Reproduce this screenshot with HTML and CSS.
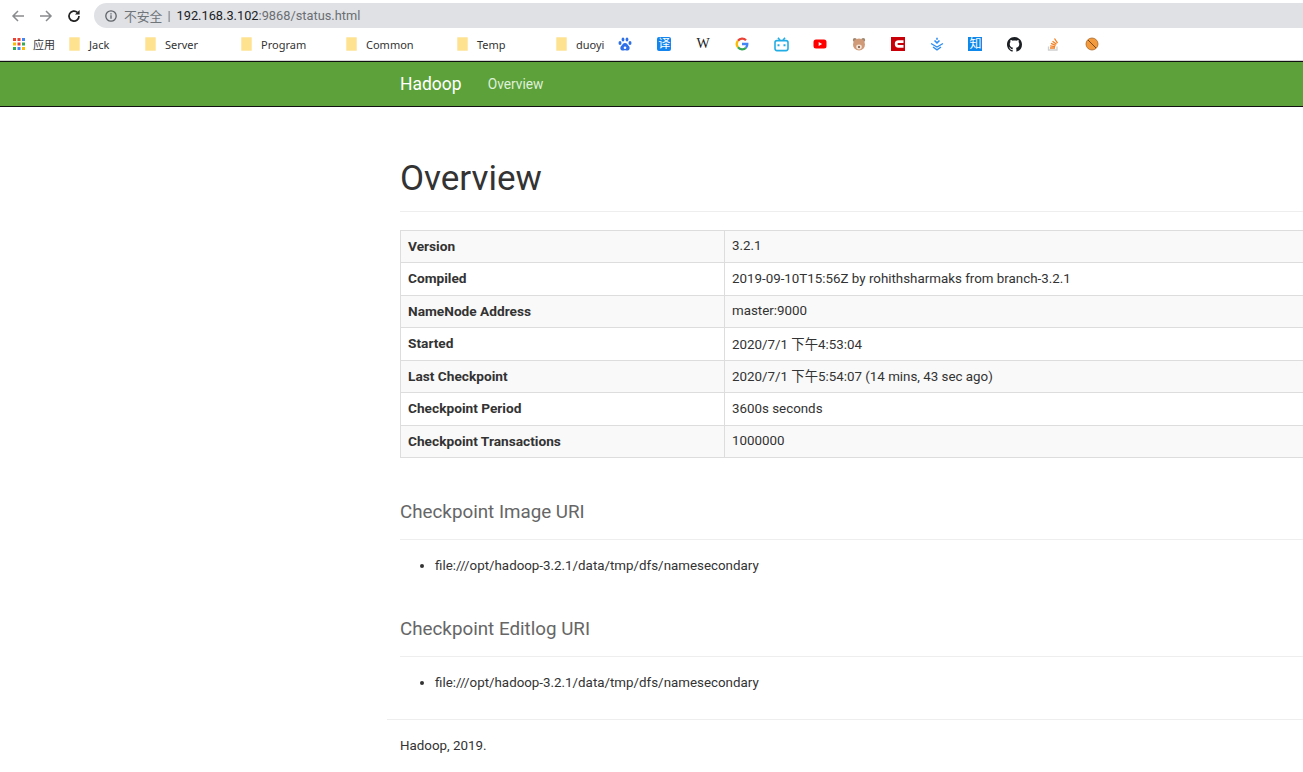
FILE: index.html
```html
<!DOCTYPE html>
<html lang="en">
<head>
    <meta charset="UTF-8">
    <title>Namenode information</title>
    <link rel="stylesheet" href="styles.css">
</head>
<body>
    <div class="toolbar">
        <div class="nav-icons">
            <svg class="nav-icon" width="16" height="16" viewBox="0 0 16 16"><path d="M14 8H3M8 3L3 8l5 5" fill="none" stroke="#8a8b8d" stroke-width="1.5"/></svg>
            <svg class="nav-icon" width="16" height="16" viewBox="0 0 16 16"><path d="M2 8h11M8 3l5 5-5 5" fill="none" stroke="#8a8b8d" stroke-width="1.5"/></svg>
            <svg class="nav-icon" width="16" height="16" viewBox="0 0 16 16"><path d="M13 8a5 5 0 1 1-1.500-3.500" fill="none" stroke="#222" stroke-width="1.700"/><path d="M13.600 2v4.600H9z" fill="#222"/></svg>
        </div>
        <div class="address-bar">
            <svg class="info-icon" width="14" height="14" viewBox="0 0 14 14"><circle cx="7" cy="7" r="5.200" fill="none" stroke="#5f6368" stroke-width="1.300"/><path d="M7 6.200v3.600M7 4.200v1.200" stroke="#5f6368" stroke-width="1.300"/></svg>
            <span class="not-secure">不安全</span>
            <span class="separator">|</span>
            <span class="url-host">192.168.3.102</span><span class="url-rest">:9868/status.html</span>
        </div>
    </div>

    <div class="bookmarks">
        <div class="bookmark apps">
            <svg width="12" height="12" viewBox="0 0 12 12">
                <rect x="0" y="0" width="3" height="3" fill="#ea4335"/><rect x="4.500" y="0" width="3" height="3" fill="#ea4335"/><rect x="9" y="0" width="3" height="3" fill="#4285f4"/>
                <rect x="0" y="4.500" width="3" height="3" fill="#fbbc05"/><rect x="4.500" y="4.500" width="3" height="3" fill="#ea4335"/><rect x="9" y="4.500" width="3" height="3" fill="#34a853"/>
                <rect x="0" y="9" width="3" height="3" fill="#34a853"/><rect x="4.500" y="9" width="3" height="3" fill="#4285f4"/><rect x="9" y="9" width="3" height="3" fill="#fbbc05"/>
            </svg>
            <span>应用</span>
        </div>
        <div class="bookmark folder jack"><span class="folder-icon"></span><span>Jack</span></div>
        <div class="bookmark folder server"><span class="folder-icon"></span><span>Server</span></div>
        <div class="bookmark folder program"><span class="folder-icon"></span><span>Program</span></div>
        <div class="bookmark folder common"><span class="folder-icon"></span><span>Common</span></div>
        <div class="bookmark folder temp"><span class="folder-icon"></span><span>Temp</span></div>
        <div class="bookmark folder duoyi"><span class="folder-icon"></span><span>duoyi</span></div>
        <div class="site-icons">
            <!-- baidu -->
            <svg width="14" height="14" viewBox="0 0 14 14" fill="#2f6fe8"><ellipse cx="2" cy="6" rx="1.500" ry="1.900"/><ellipse cx="5" cy="2.600" rx="1.400" ry="2"/><ellipse cx="9" cy="2.600" rx="1.400" ry="2"/><ellipse cx="12" cy="6" rx="1.500" ry="1.900"/><path d="M7 6c-2 0-2.500 1.800-3.800 2.900C1.800 10 2 13.500 4.800 13.500c1 0 1.400-.3 2.200-.3s1.200.3 2.200.3c2.800 0 3-3.500 1.600-4.600C9.500 7.800 9 6 7 6z"/><circle cx="7" cy="10.800" r="1.300" fill="#fff"/></svg>
            <!-- translate -->
            <span class="tile tile-blue">译</span>
            <!-- wikipedia -->
            <span class="wiki">W</span>
            <!-- google -->
            <svg width="14" height="14" viewBox="0 0 14 14" fill="none" stroke-width="2.300"><path d="M11 3.200A5.300 5.300 0 0 0 3 3.700" stroke="#ea4335"/><path d="M3 3.700a5.300 5.300 0 0 0 0 6.600" stroke="#fbbc05"/><path d="M3 10.300a5.300 5.300 0 0 0 8 .4" stroke="#34a853"/><path d="M11 10.700A5.300 5.300 0 0 0 12.300 7H7" stroke="#4285f4"/></svg>
            <!-- bilibili -->
            <svg width="15" height="15" viewBox="0 0 15 15" fill="none" stroke="#23ade5" stroke-width="1.600"><rect x="1" y="3.600" width="13" height="10" rx="2"/><path d="M4 .8l2 2.500M11 .8L9 3.300"/><path d="M4.500 7.200v2M10.500 7.200v2" stroke-width="2"/></svg>
            <!-- youtube -->
            <svg width="14" height="14" viewBox="0 0 14 14"><rect x="0.500" y="2.500" width="13" height="9" rx="2.500" fill="#f00"/><path d="M5.700 5v4l3.400-2z" fill="#fff"/></svg>
            <!-- bear -->
            <svg width="14" height="14" viewBox="0 0 14 14"><circle cx="2.800" cy="3" r="2" fill="#a0876f"/><circle cx="11.200" cy="3" r="2" fill="#a0876f"/><circle cx="7" cy="7.500" r="6" fill="#d09a78"/><ellipse cx="7" cy="10" rx="2.800" ry="2.400" fill="#f2e2d4"/><circle cx="7" cy="10" r="1" fill="#6b4a38"/></svg>
            <!-- csdn -->
            <svg width="14" height="14" viewBox="0 0 14 14"><rect width="14" height="14" fill="#c90007"/><path d="M12.500 4.600H7.500a2.400 2.400 0 0 0 0 4.800h5" fill="none" stroke="#fff" stroke-width="2.600"/></svg>
            <!-- download arrows -->
            <svg width="14" height="14" viewBox="0 0 14 14" fill="none" stroke="#2f8df0" stroke-width="1.400"><path d="M1 6.500l6 3.500 6-3.500"/><path d="M3 10l4 2.800 4-2.800"/><path d="M4.500 3.500L7 5.800l2.500-2.300" stroke-width="1.600"/><path d="M7 .8v2" stroke-width="1.600"/></svg>
            <!-- zhihu -->
            <span class="tile tile-zhihu">知</span>
            <!-- github -->
            <svg width="15" height="15" viewBox="0 0 16 16"><path fill="#1b1f23" d="M8 0C3.580 0 0 3.580 0 8c0 3.540 2.290 6.530 5.470 7.590.4.070.55-.17.55-.38 0-.19-.01-.82-.01-1.490-2.010.37-2.530-.49-2.690-.94-.09-.23-.48-.94-.82-1.130-.28-.15-.68-.52-.01-.53.630-.01 1.080.58 1.230.82.720 1.210 1.870.87 2.330.66.070-.52.280-.87.510-1.070-1.780-.2-3.640-.89-3.640-3.950 0-.87.310-1.590.820-2.150-.08-.2-.36-1.020.08-2.120 0 0 .67-.21 2.200.820.640-.18 1.320-.27 2-.27s1.360.09 2 .27c1.530-1.040 2.200-.82 2.200-.82.440 1.100.160 1.920.080 2.120.510.560.820 1.270.820 2.150 0 3.070-1.870 3.750-3.650 3.950.290.250.540.730.540 1.480 0 1.070-.01 1.930-.01 2.200 0 .210.150.460.550.380A8.010 8.010 0 0 0 16 8c0-4.420-3.580-8-8-8z"/></svg>
            <!-- stack overflow -->
            <svg width="14" height="14" viewBox="0 0 14 14" fill="none"><path d="M2.500 9.500v3.500h8.500V9.500" stroke="#cfcfcf" stroke-width="1.300"/><path d="M4 11h5M4.200 8.800l5 .8M5 6.400l4.700 1.900M6.500 4.200l4 3M8.500 1.500l3 4.700" stroke="#f48024" stroke-width="1.300"/></svg>
            <!-- ball -->
            <svg width="14" height="14" viewBox="0 0 14 14"><circle cx="7" cy="7" r="6" fill="#f29a3c" stroke="#a8682a" stroke-width="0.800"/><path d="M3 3l8 8" stroke="#7a4a1e" stroke-width="1"/></svg>
        </div>
    </div>

    <nav class="navbar">
        <div class="container navbar-inner">
            <span class="navbar-brand">Hadoop</span>
            <span class="nav-link">Overview</span>
        </div>
    </nav>

    <div class="container content">
        <div class="page-header">
            <h1>Overview</h1>
        </div>

        <table class="info-table">
            <tr><th>Version</th><td>3.2.1</td></tr>
            <tr><th>Compiled</th><td>2019-09-10T15:56Z by rohithsharmaks from branch-3.2.1</td></tr>
            <tr><th>NameNode Address</th><td>master:9000</td></tr>
            <tr><th>Started</th><td>2020/7/1 下午4:53:04</td></tr>
            <tr><th>Last Checkpoint</th><td>2020/7/1 下午5:54:07 (14 mins, 43 sec ago)</td></tr>
            <tr><th>Checkpoint Period</th><td>3600s seconds</td></tr>
            <tr><th>Checkpoint Transactions</th><td>1000000</td></tr>
        </table>

        <div class="section-header">
            <h2>Checkpoint Image URI</h2>
        </div>
        <ul class="uri-list">
            <li>file:///opt/hadoop-3.2.1/data/tmp/dfs/namesecondary</li>
        </ul>

        <div class="section-header">
            <h2>Checkpoint Editlog URI</h2>
        </div>
        <ul class="uri-list">
            <li>file:///opt/hadoop-3.2.1/data/tmp/dfs/namesecondary</li>
        </ul>
    </div>

    <div class="footer-wrap">
        <div class="footer-line">
            <p>Hadoop, 2019.</p>
        </div>
    </div>
</body>
</html>
```

FILE: styles.css
```css
html, body {
    height: 772px;
    overflow: hidden;
}

body {
    margin: 0;
    background-color: #fff;
    color: #333;
    font-family: Roboto, "Noto Sans CJK SC", sans-serif;
    font-size: 13.35px;
}

.toolbar {
    height: 29px;
    display: flex;
    align-items: center;
    box-sizing: border-box;
    padding-top: 2px;
}

.nav-icons {
    width: 94px;
    display: flex;
    gap: 12px;
    padding-left: 10px;
    box-sizing: border-box;
}

.address-bar {
    flex: 1;
    height: 25px;
    background-color: #dfe1e5;
    border-radius: 13px 0 0 13px;
    display: flex;
    align-items: center;
    padding-left: 10px;
    font-size: 12.8px;
    color: #757575;
}

.info-icon {
    margin-right: 6px;
}

.not-secure {
    color: #70757a;
}

.separator {
    margin: 0 6px 0 5px;
    color: #70757a;
}

.url-host {
    color: #202124;
}

.url-rest {
    color: #6b6e72;
}

.bookmarks {
    height: 30px;
    padding-bottom: 1px;
    display: flex;
    align-items: center;
    font-family: "Noto Sans", "Noto Sans CJK SC", sans-serif;
    font-size: 11px;
    color: #333;
    border-bottom: 1px solid #d4d4d4;
}

.bookmark {
    display: flex;
    align-items: center;
}

.apps {
    width: 69px;
    padding-left: 13px;
    box-sizing: border-box;
    gap: 8px;
}

.folder {
    gap: 9px;
}

.folder-icon {
    width: 11px;
    height: 14px;
    box-sizing: border-box;
    background-color: #ffe28f;
    border: 1px solid #fdeab0;
    border-radius: 1px;
}

.jack { width: 76px; }
.server { width: 96px; }
.program { width: 105px; }
.common { width: 111px; }
.temp { width: 99px; }
.duoyi { width: 50px; }

.site-icons {
    display: grid;
    grid-template-columns: repeat(13, 38.9px);
    justify-items: center;
    align-items: center;
}

.tile {
    width: 14px;
    height: 14px;
    color: #fff;
    font-size: 12px;
    line-height: 14px;
    text-align: center;
}

.tile-blue {
    background-color: #1485ee;
    border-radius: 2px;
}

.tile-zhihu {
    background-color: #0f88eb;
}

.wiki {
    width: 14px;
    font-family: "Liberation Serif", serif;
    font-size: 14px;
    line-height: 14px;
    color: #222;
    text-align: center;
}

.container {
    margin-left: 385px;
    padding-left: 15px;
    box-sizing: border-box;
}

.navbar {
    height: 46px;
    background-color: #5da13b;
    border-top: 1px solid #111;
    border-bottom: 1px solid #111;
    box-sizing: border-box;
}

.navbar-inner {
    height: 44px;
    padding-bottom: 1px;
    display: flex;
    align-items: center;
}

.navbar-brand {
    color: #fff;
    font-size: 17.5px;
    margin-right: 26px;
}

.nav-link {
    color: #dff0d8;
    font-size: 13.75px;
}

.page-header {
    margin-top: 44px;
    padding-bottom: 12px;
    border-bottom: 1px solid #eee;
    margin-bottom: 18px;
}

h1 {
    margin: 0;
    padding-top: 9px;
    font-size: 35px;
    font-weight: 400;
    line-height: 1.1;
    color: #333;
}

.info-table {
    width: 100%;
    border-collapse: collapse;
    margin-bottom: 44px;
}

.info-table th,
.info-table td {
    border: 1px solid #ddd;
    padding: 0 7px 1px;
    height: 32.5px;
    box-sizing: border-box;
    text-align: left;
}

.info-table td {
    border-right: 0;
}

.info-table th {
    width: 324px;
    font-size: 13.7px;
    font-weight: 700;
}

.info-table tr:nth-child(odd) th,
.info-table tr:nth-child(odd) td {
    background-color: #f9f9f9;
}

.section-header {
    margin-top: 43px;
    padding-bottom: 16.4px;
    border-bottom: 1px solid #eee;
}

h2 {
    margin: 0;
    font-size: 18.8px;
    font-weight: 400;
    line-height: 1.1;
    color: #666;
}

.uri-list {
    margin: 16px 0 0;
    padding-left: 35px;
    line-height: 20px;
}

.footer-wrap {
    margin-top: 26px;
    padding-left: 387px;
}

.footer-line {
    border-top: 1px solid #eee;
    padding: 18px 0 0 13px;
}

.footer-line p {
    margin: 0;
}
```
